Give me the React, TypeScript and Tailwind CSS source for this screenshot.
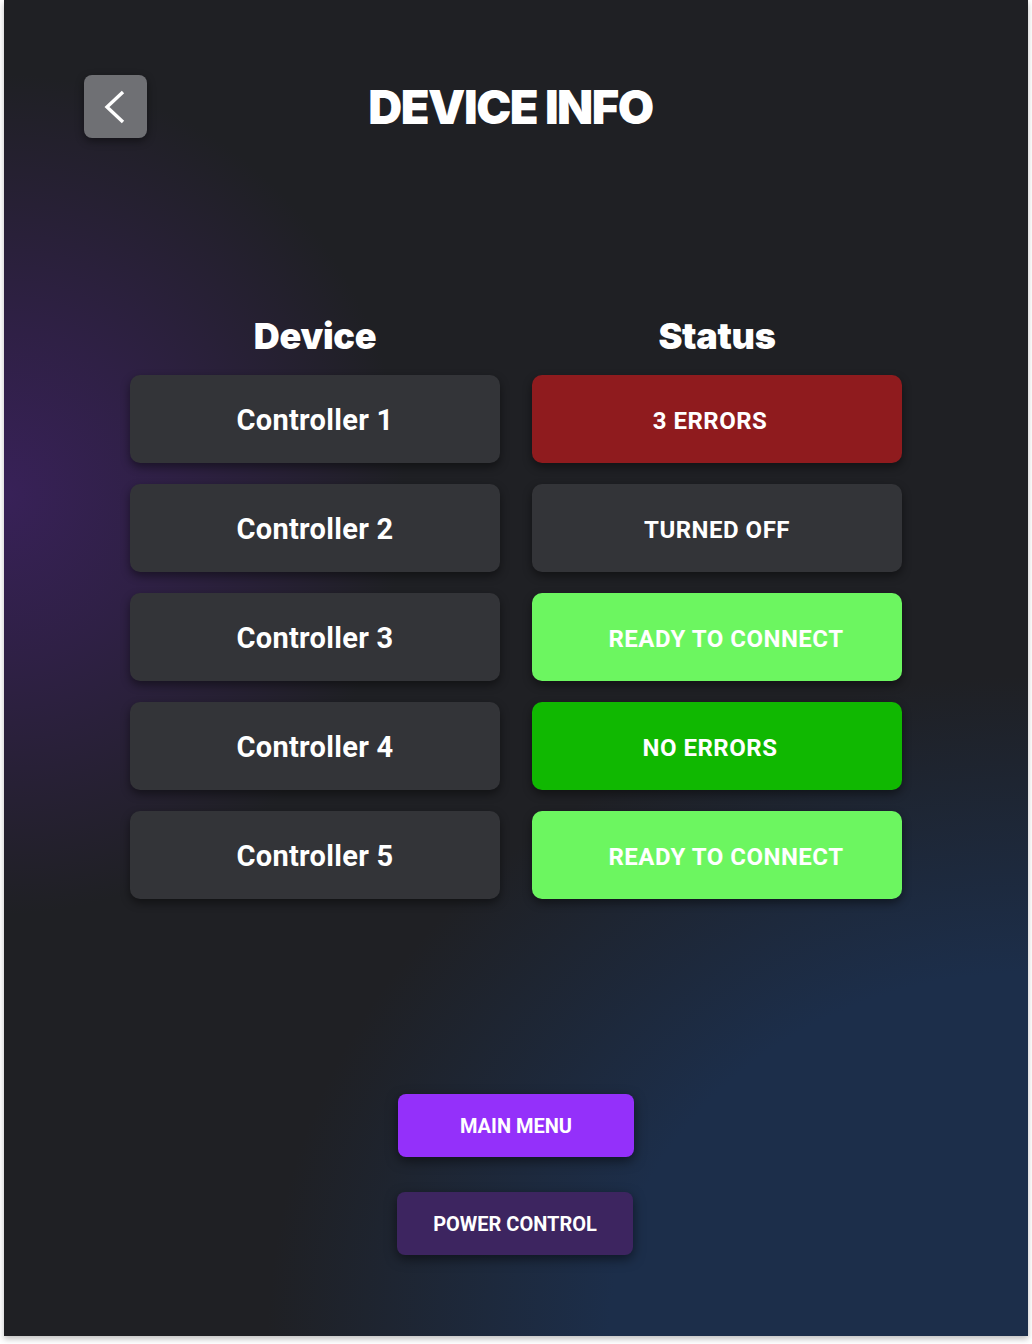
type Row = {
  device: string;
  status: string;
  bg: string;
  shift: string;
};

const rows: Row[] = [
  { device: "Controller 1", status: "3 ERRORS", bg: "bg-[#8f1b1e]", shift: "pr-[14px]" },
  { device: "Controller 2", status: "TURNED OFF", bg: "bg-[#333438]", shift: "" },
  { device: "Controller 3", status: "READY TO CONNECT", bg: "bg-[#6cf660]", shift: "pl-[18px]" },
  { device: "Controller 4", status: "NO ERRORS", bg: "bg-[#10b801]", shift: "pr-[14px]" },
  { device: "Controller 5", status: "READY TO CONNECT", bg: "bg-[#6cf660]", shift: "pl-[18px]" },
];

const boxClass =
  "h-[88px] rounded-[10px] flex items-center justify-center pt-[3px] text-white shadow-[0_4px_10px_rgba(0,0,0,0.45)]";

const headClass =
  "h-[40px] mb-[19px] flex items-center justify-center text-white font-['Inter',sans-serif] font-black text-[36px] tracking-[-0.3px]";

export default function App() {
  return (
    <div className="min-h-screen bg-white pl-[4px] font-['Roboto',sans-serif]">
      <div className="w-[1024px] h-[1336px] flex flex-col shadow-[0_3px_6px_rgba(0,0,0,0.25)] bg-[#1f2024] bg-[radial-gradient(ellipse_400px_420px_at_0%_37%,rgba(56,33,88,1),rgba(52,32,80,0.75)_40%,transparent_100%),radial-gradient(ellipse_760px_660px_at_100%_100%,#1c2e4a_55%,transparent_100%)]">
        {/* Top bar */}
        <div className="mt-[75px] grid grid-cols-[1fr_auto_1fr] items-center h-[63px]">
          <div className="pl-[80px] h-[63px]">
            <button className="block w-[63px] h-[63px] rounded-[8px] bg-[#6f7074] shadow-[0_3px_8px_rgba(0,0,0,0.45)]">
              <svg className="block" width="63" height="63" viewBox="0 0 63 63" fill="none">
                <path d="M39 17 L23 32 L39 47" stroke="white" strokeWidth="3.4" />
              </svg>
            </button>
          </div>
          <h1 className="mr-[11px] text-white font-['Inter',sans-serif] font-black text-[47px] tracking-[-1.5px] leading-none">
            DEVICE INFO
          </h1>
          <div />
        </div>

        {/* Table */}
        <div className="mt-[178px] mx-auto w-[772px] grid grid-cols-2 gap-x-[32px]">
          <div className={headClass}>Device</div>
          <div className={headClass}>Status</div>
          {rows.map((r) => (
            <div key={r.device} className="contents">
              <div className={`${boxClass} bg-[#333438] mb-[21px] text-[29px] tracking-[0.3px] font-bold`}>
                {r.device}
              </div>
              <div className={`${boxClass} ${r.bg} ${r.shift} mb-[21px] text-[24px] tracking-[0.5px] font-bold`}>
                {r.status}
              </div>
            </div>
          ))}
        </div>

        {/* Bottom buttons */}
        <div className="mt-[174px] flex flex-col items-center gap-[35px]">
          <button className="w-[236px] h-[63px] rounded-[8px] bg-[#9430fa] text-white text-[20px] font-bold shadow-[0_4px_12px_rgba(0,0,0,0.5)]">
            MAIN MENU
          </button>
          <button className="w-[236px] h-[63px] -ml-[2px] rounded-[8px] bg-[#3d2560] text-white text-[20px] font-bold shadow-[0_4px_12px_rgba(0,0,0,0.5)]">
            POWER CONTROL
          </button>
        </div>
      </div>
    </div>
  );
}
